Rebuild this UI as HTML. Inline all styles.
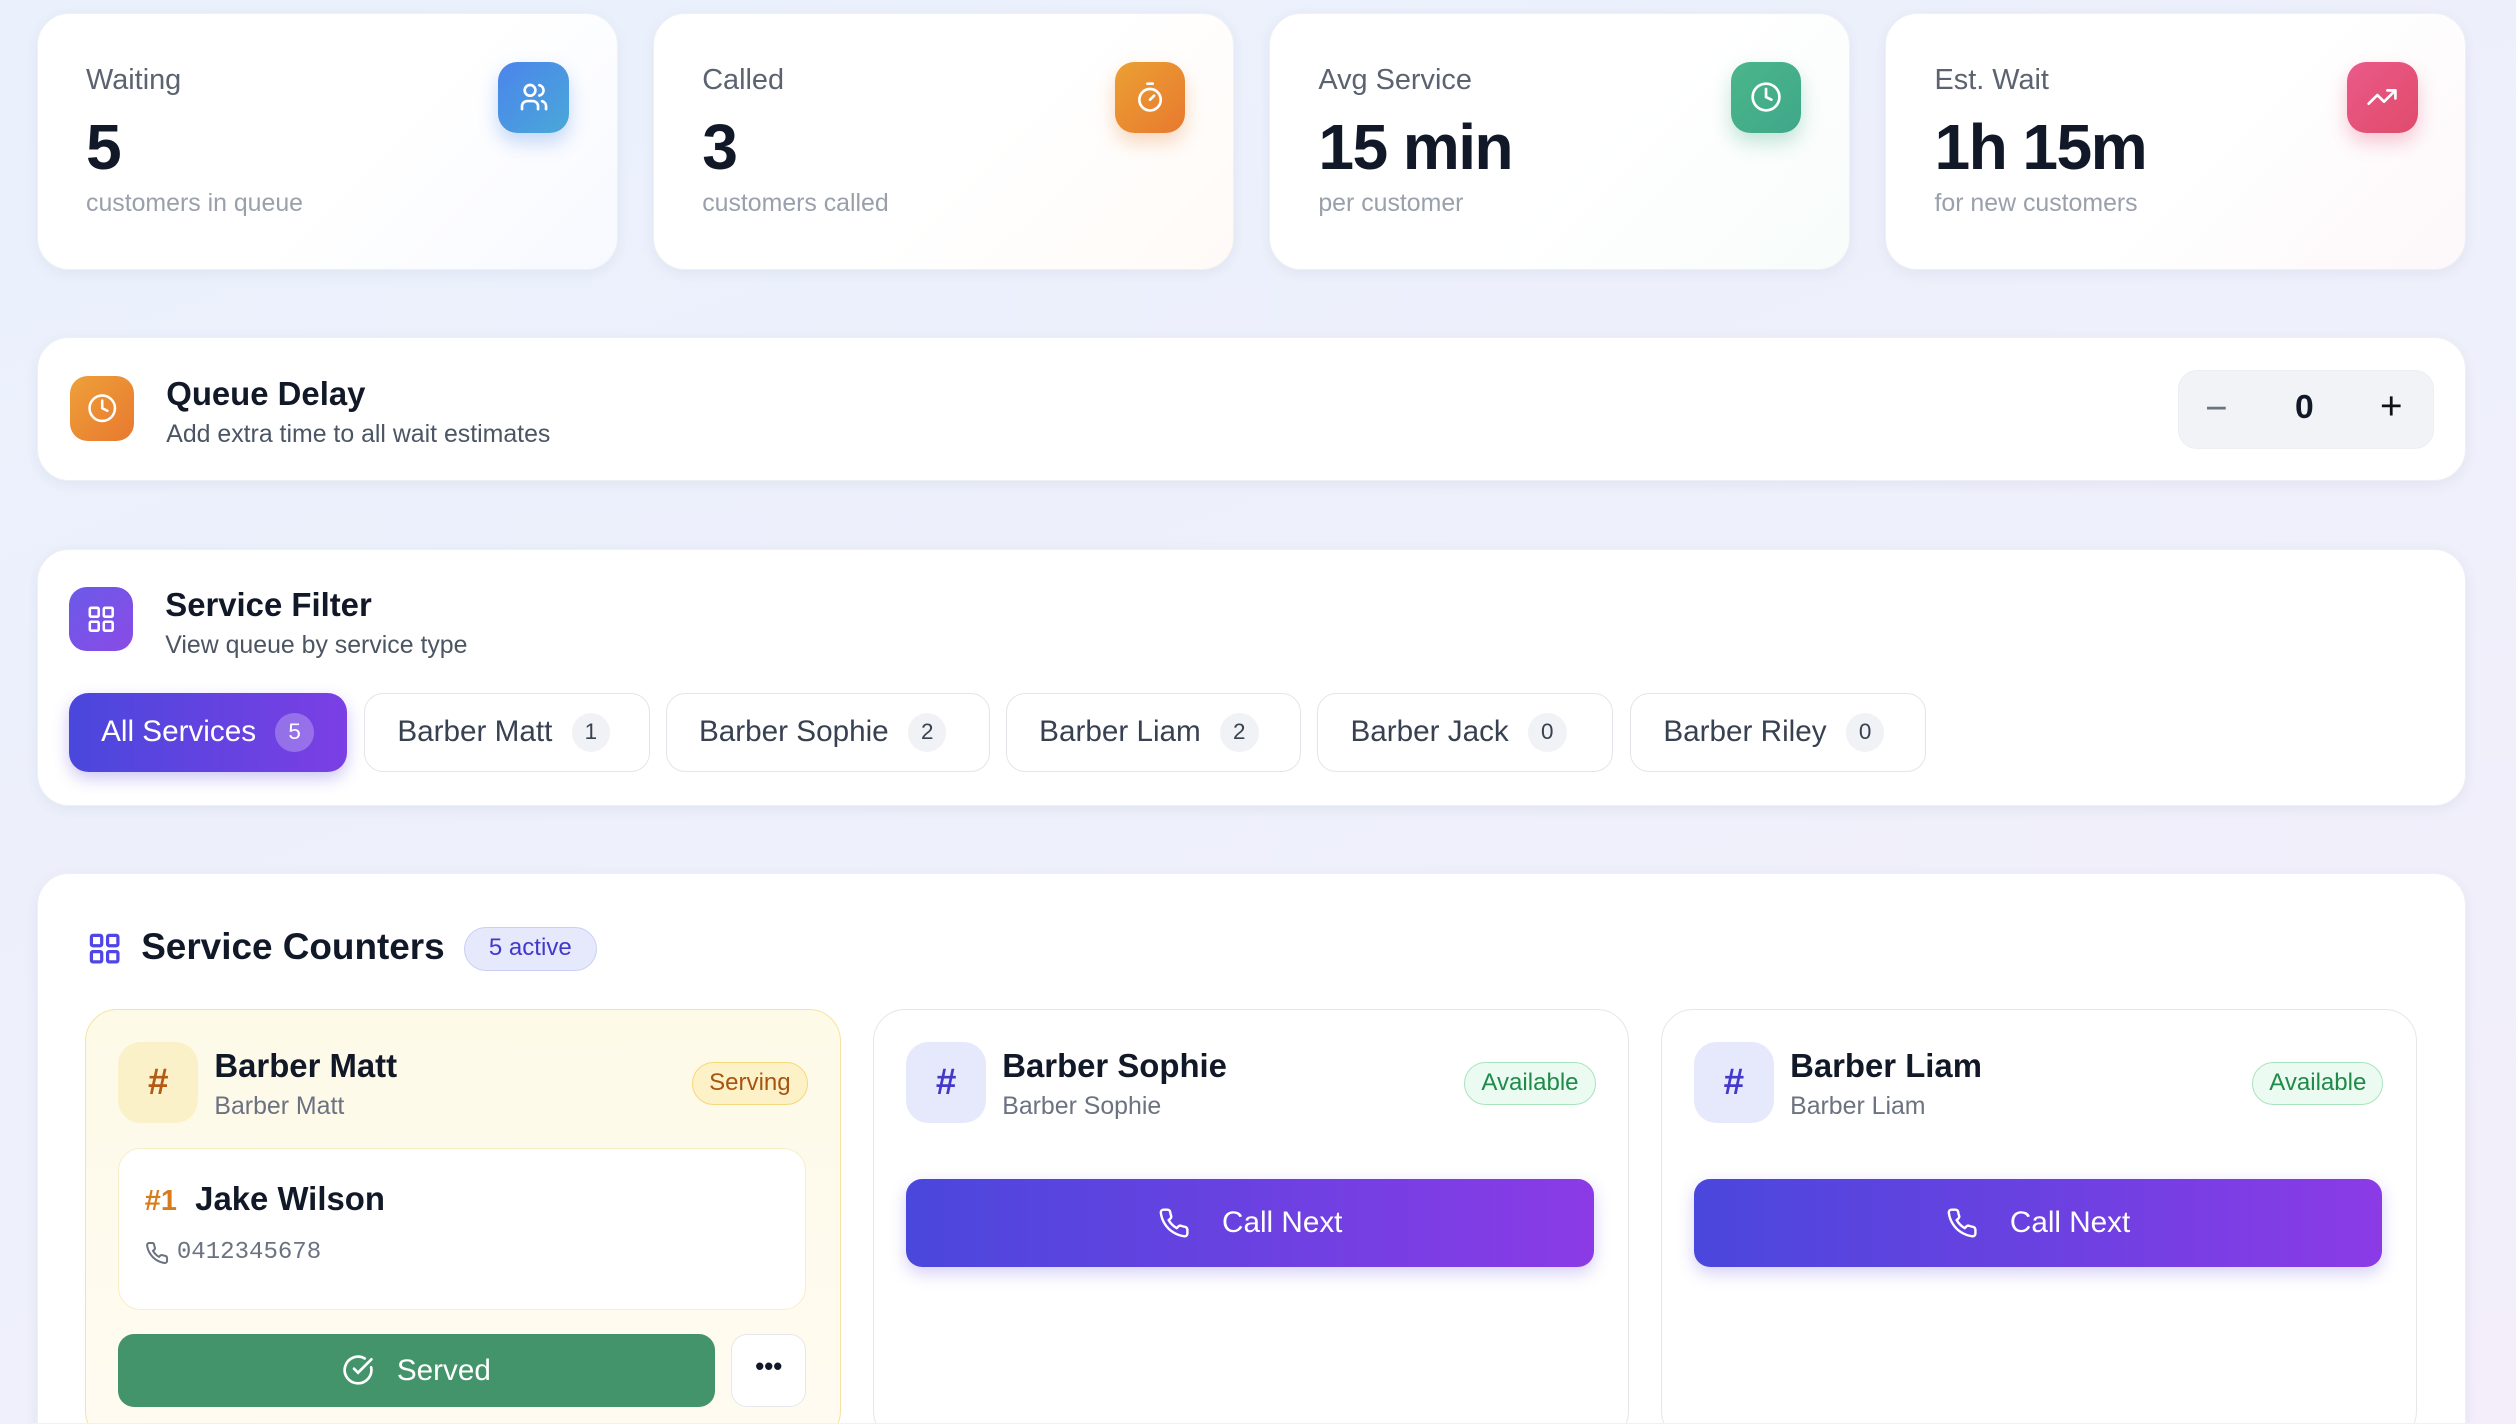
<!DOCTYPE html>
<html><head><meta charset="utf-8"><style>
*{box-sizing:border-box;margin:0;padding:0}
html,body{width:2516px;height:1424px;overflow:hidden}
body{background:linear-gradient(160deg,#eaf1fc 0%,#eef0fb 50%,#f3eefa 100%);font-family:"Liberation Sans",sans-serif;color:#111827}
#w{zoom:1.6046;width:1568px;height:887px;position:relative;overflow:hidden}
.a{position:absolute}
.card{position:absolute;background:#fff;border-radius:20px;box-shadow:0 2px 8px rgba(60,70,120,.07);border:1px solid #eef0f5}
.lbl{position:absolute;left:30px;top:31px;font-size:18px;color:#5b6270}
.val{position:absolute;left:30px;top:60px;font-size:40px;font-weight:bold;color:#111827;letter-spacing:-1px}
.sub{position:absolute;left:30px;top:109px;font-size:15.5px;color:#9aa0ab}
.ic{position:absolute;width:44px;height:44px;border-radius:12px;display:flex;align-items:center;justify-content:center}
.chip{position:absolute;top:432px;height:49px;border:1px solid #e3e5ea;border-radius:12px;background:#fff;font-size:18.5px;color:#374151;display:flex;align-items:center;padding-left:20px}
.cnt{display:inline-block;width:24px;height:24px;border-radius:12px;background:#f1f2f5;font-size:14px;text-align:center;line-height:24px;margin-left:12px;color:#374151}
.cc{position:absolute;top:629px;width:471px;height:270px;border:1px solid #e5e7eb;border-radius:20px;background:#fff}
.hash{position:absolute;left:20px;top:20px;width:50px;height:50px;border-radius:14px;display:flex;align-items:center;justify-content:center;font-size:23px;font-weight:bold}
.nm{position:absolute;left:80px;top:23px;font-size:20.5px;font-weight:bold}
.ns{position:absolute;left:80px;top:51px;font-size:15.5px;color:#6b7280}
.bd{position:absolute;top:32px;height:27px;border-radius:14px;font-size:15px;padding:0 10px;line-height:25px}
.call{position:absolute;left:20px;top:105px;width:429px;height:55px;border-radius:10px;background:linear-gradient(90deg,#4a47dc,#8b3be6);color:#fff;font-size:18.5px;display:flex;align-items:center;justify-content:center;gap:20px;box-shadow:0 4px 10px rgba(90,70,220,.25)}
</style></head><body><div id="w">

<div class="card" style="left:23px;top:8px;width:362px;height:160px;background:linear-gradient(135deg,#fff 55%,#f7f9ff)">
<div class="lbl">Waiting</div><div class="val">5</div><div class="sub">customers in queue</div>
<div class="ic" style="left:287px;top:30px;background:linear-gradient(135deg,#4b84ec,#4aa8d8);box-shadow:0 6px 12px rgba(70,130,230,.3)"><svg width="20" height="20" viewBox="0 0 24 24" fill="none" stroke="#fff" stroke-width="2" stroke-linecap="round"><circle cx="9" cy="7" r="4"/><path d="M3 21v-2a4 4 0 0 1 4-4h4a4 4 0 0 1 4 4v2M16 3.1a4 4 0 0 1 0 7.8M21 21v-2a4 4 0 0 0-3-3.9"/></svg></div></div>

<div class="card" style="left:407px;top:8px;width:362px;height:160px;background:linear-gradient(135deg,#fff 55%,#fffaf6)">
<div class="lbl">Called</div><div class="val">3</div><div class="sub">customers called</div>
<div class="ic" style="left:287px;top:30px;background:linear-gradient(135deg,#eba033,#e8792f);box-shadow:0 6px 12px rgba(230,130,50,.3)"><svg width="20" height="20" viewBox="0 0 24 24" fill="none" stroke="#fff" stroke-width="2" stroke-linecap="round"><circle cx="12" cy="14" r="8"/><path d="M10 2h4M12 14l3-3"/></svg></div></div>

<div class="card" style="left:791px;top:8px;width:362px;height:160px;background:linear-gradient(135deg,#fff 55%,#f7fcfa)">
<div class="lbl">Avg Service</div><div class="val">15 min</div><div class="sub">per customer</div>
<div class="ic" style="left:287px;top:30px;background:linear-gradient(135deg,#4bb68a,#3fa789);box-shadow:0 6px 12px rgba(60,170,130,.3)"><svg width="20" height="20" viewBox="0 0 24 24" fill="none" stroke="#fff" stroke-width="2" stroke-linecap="round"><circle cx="12" cy="12" r="10"/><path d="M12 6v6l4 2"/></svg></div></div>

<div class="card" style="left:1175px;top:8px;width:362px;height:160px;background:linear-gradient(135deg,#fff 55%,#fdf7f9)">
<div class="lbl">Est. Wait</div><div class="val">1h 15m</div><div class="sub">for new customers</div>
<div class="ic" style="left:287px;top:30px;background:linear-gradient(135deg,#ea5a8a,#e04b6a);box-shadow:0 6px 12px rgba(225,80,120,.3)"><svg width="20" height="20" viewBox="0 0 24 24" fill="none" stroke="#fff" stroke-width="2" stroke-linecap="round" stroke-linejoin="round"><path d="M22 7l-8.5 8.5-5-5L2 17M16 7h6v6"/></svg></div></div>

<div class="card" style="left:23px;top:210px;width:1514px;height:90px">
<div class="ic" style="left:20px;top:24px;width:40px;height:40px;border-radius:11px;background:linear-gradient(135deg,#eea03a,#e8792f)"><svg width="19" height="19" viewBox="0 0 24 24" fill="none" stroke="#fff" stroke-width="2" stroke-linecap="round"><circle cx="12" cy="12" r="10"/><path d="M12 6v6l4 2"/></svg></div>
<div class="a" style="left:80px;top:23px;font-size:20.5px;font-weight:bold">Queue Delay</div>
<div class="a" style="left:80px;top:51px;font-size:15.5px;color:#4b5563">Add extra time to all wait estimates</div>
<div class="a" style="left:1334px;top:20px;width:159px;height:49px;background:#f1f3f6;border-radius:12px;border:1px solid #eceef2">
<div class="a" style="left:16px;top:10px;font-size:24px;color:#6b7280">−</div>
<div class="a" style="left:72px;top:11px;font-size:21px;font-weight:bold">0</div>
<div class="a" style="left:125px;top:9px;font-size:24px;color:#111">+</div></div></div>

<div class="card" style="left:23px;top:342px;width:1514px;height:160px"></div>
<div class="ic" style="left:43px;top:366px;width:40px;height:40px;border-radius:11px;background:linear-gradient(135deg,#6a5ae8,#8a4be6)"><svg width="19" height="19" viewBox="0 0 24 24" fill="none" stroke="#fff" stroke-width="2"><rect x="3" y="3" width="7" height="7" rx="1"/><rect x="14" y="3" width="7" height="7" rx="1"/><rect x="3" y="14" width="7" height="7" rx="1"/><rect x="14" y="14" width="7" height="7" rx="1"/></svg></div>
<div class="a" style="left:103px;top:365px;font-size:20.5px;font-weight:bold">Service Filter</div>
<div class="a" style="left:103px;top:393px;font-size:15.5px;color:#4b5563">View queue by service type</div>
<div class="chip" style="left:43px;width:173px;background:linear-gradient(90deg,#4a47dc,#7b3fe4);color:#fff;border:none;box-shadow:0 4px 10px rgba(90,70,220,.3)">All Services<span class="cnt" style="background:rgba(255,255,255,.25);color:#fff">5</span></div>
<div class="chip" style="left:227px;width:178px">Barber Matt<span class="cnt">1</span></div>
<div class="chip" style="left:415px;width:202px">Barber Sophie<span class="cnt">2</span></div>
<div class="chip" style="left:627px;width:184px">Barber Liam<span class="cnt">2</span></div>
<div class="chip" style="left:821px;width:184px">Barber Jack<span class="cnt">0</span></div>
<div class="chip" style="left:1016px;width:184px">Barber Riley<span class="cnt">0</span></div>

<div class="card" style="left:23px;top:544px;width:1514px;height:400px"></div>
<svg class="a" style="left:54px;top:580px" width="22" height="22" viewBox="0 0 24 24" fill="none" stroke="#4f46e5" stroke-width="2.2"><rect x="3" y="3" width="7" height="7" rx="1"/><rect x="14" y="3" width="7" height="7" rx="1"/><rect x="3" y="14" width="7" height="7" rx="1"/><rect x="14" y="14" width="7" height="7" rx="1"/></svg>
<div class="a" style="left:88px;top:577px;font-size:23px;font-weight:bold">Service Counters</div>
<div class="a" style="left:289px;top:578px;width:83px;height:27px;border-radius:14px;background:#e6e9fb;border:1px solid #c9cff5;color:#4338ca;font-size:15px;text-align:center;line-height:25px">5 active</div>

<div class="cc" style="left:53px;background:linear-gradient(180deg,#fefae8,#fffbf1);border-color:#f7e3a0">
<div class="hash" style="background:#fbf1c9;color:#b45a14">#</div>
<div class="nm">Barber Matt</div><div class="ns">Barber Matt</div>
<div class="bd" style="right:20px;background:#fdf2c7;border:1px solid #f5d878;color:#a75410">Serving</div>
<div class="a" style="left:20px;top:86px;width:429px;height:101px;background:#fff;border:1px solid #f8eec8;border-radius:14px">
<div class="a" style="left:16px;top:19px;font-size:20.5px;font-weight:bold"><span style="color:#d97b1c;font-size:18px">#1</span>&nbsp; Jake Wilson</div>
<svg class="a" style="left:16px;top:57px" width="15" height="15" viewBox="0 0 24 24" fill="none" stroke="#6b7280" stroke-width="2"><path d="M22 16.9v3a2 2 0 0 1-2.2 2 19.8 19.8 0 0 1-8.6-3.1 19.5 19.5 0 0 1-6-6A19.8 19.8 0 0 1 2.1 4.2 2 2 0 0 1 4.1 2h3a2 2 0 0 1 2 1.7c.1 1 .4 1.9.7 2.8a2 2 0 0 1-.5 2.1L8 9.8a16 16 0 0 0 6 6l1.3-1.3a2 2 0 0 1 2.1-.4c.9.3 1.8.6 2.8.7a2 2 0 0 1 1.7 2z"/></svg>
<div class="a" style="left:36px;top:56px;font-family:'Liberation Mono',monospace;font-size:15px;color:#6b7280">0412345678</div></div>
<div class="a" style="left:20px;top:202px;width:372px;height:45px;border-radius:10px;background:#44946b;color:#fff;font-size:18.5px;display:flex;align-items:center;justify-content:center;gap:14px"><svg width="20" height="20" viewBox="0 0 24 24" fill="none" stroke="#fff" stroke-width="2" stroke-linecap="round"><path d="M21.8 10A10 10 0 1 1 17 3.3"/><path d="M9 11l3 3L22 4"/></svg>Served</div>
<div class="a" style="left:402px;top:202px;width:47px;height:45px;border-radius:10px;background:#fff;border:1px solid #e5e7eb;text-align:center;line-height:40px;font-weight:bold;font-size:16px">•••</div></div>

<div class="cc" style="left:544px">
<div class="hash" style="background:#e6e9fb;color:#4338ca">#</div>
<div class="nm">Barber Sophie</div><div class="ns">Barber Sophie</div>
<div class="bd" style="right:20px;background:#ecfbf1;border:1px solid #a9e3bd;color:#208a4a">Available</div>
<div class="call"><svg width="20" height="20" viewBox="0 0 24 24" fill="none" stroke="#fff" stroke-width="1.8"><path d="M22 16.9v3a2 2 0 0 1-2.2 2 19.8 19.8 0 0 1-8.6-3.1 19.5 19.5 0 0 1-6-6A19.8 19.8 0 0 1 2.1 4.2 2 2 0 0 1 4.1 2h3a2 2 0 0 1 2 1.7c.1 1 .4 1.9.7 2.8a2 2 0 0 1-.5 2.1L8 9.8a16 16 0 0 0 6 6l1.3-1.3a2 2 0 0 1 2.1-.4c.9.3 1.8.6 2.8.7a2 2 0 0 1 1.7 2z"/></svg>Call Next</div></div>

<div class="cc" style="left:1035px">
<div class="hash" style="background:#e6e9fb;color:#4338ca">#</div>
<div class="nm">Barber Liam</div><div class="ns">Barber Liam</div>
<div class="bd" style="right:20px;background:#ecfbf1;border:1px solid #a9e3bd;color:#208a4a">Available</div>
<div class="call"><svg width="20" height="20" viewBox="0 0 24 24" fill="none" stroke="#fff" stroke-width="1.8"><path d="M22 16.9v3a2 2 0 0 1-2.2 2 19.8 19.8 0 0 1-8.6-3.1 19.5 19.5 0 0 1-6-6A19.8 19.8 0 0 1 2.1 4.2 2 2 0 0 1 4.1 2h3a2 2 0 0 1 2 1.7c.1 1 .4 1.9.7 2.8a2 2 0 0 1-.5 2.1L8 9.8a16 16 0 0 0 6 6l1.3-1.3a2 2 0 0 1 2.1-.4c.9.3 1.8.6 2.8.7a2 2 0 0 1 1.7 2z"/></svg>Call Next</div></div>

</div></body></html>
